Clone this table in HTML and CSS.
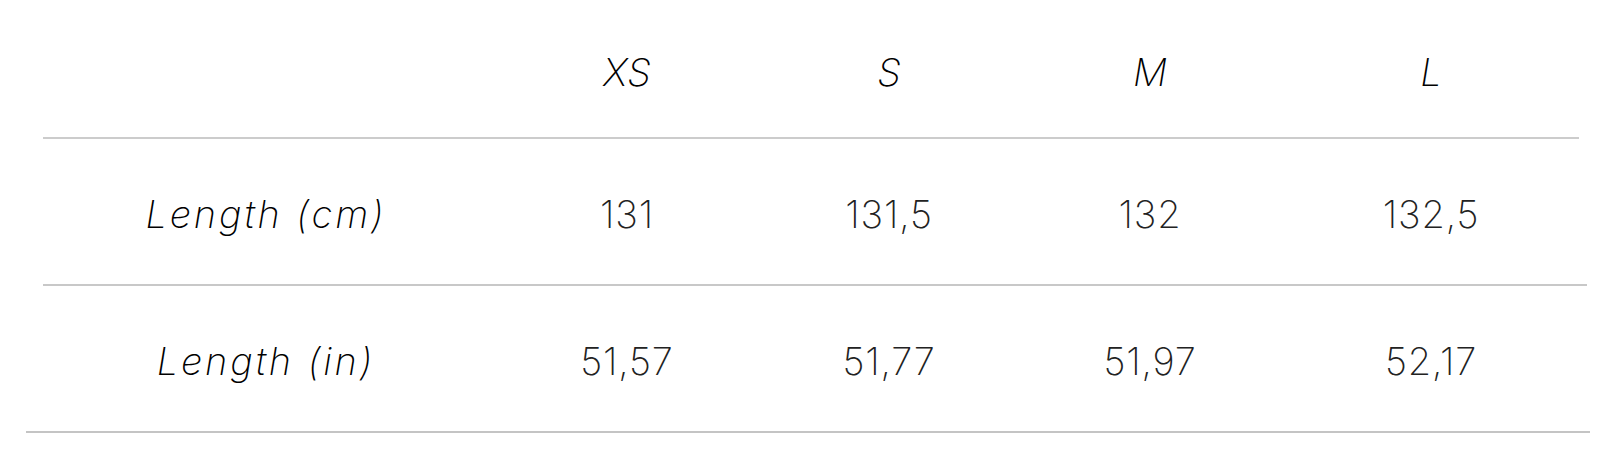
FILE: index.html
```html
<!DOCTYPE html>
<html lang="en">
<head>
<meta charset="utf-8">
<title>Size chart</title>
<link rel="stylesheet" href="styles.css">
</head>
<body>
<div class="chart">
  <div class="row head">
    <div class="cell"></div>
    <div class="cell">XS</div>
    <div class="cell">S</div>
    <div class="cell">M</div>
    <div class="cell">L</div>
  </div>
  <div class="rule rule-1"></div>
  <div class="row">
    <div class="cell label">Length (cm)</div>
    <div class="cell val">131</div>
    <div class="cell val">131,5</div>
    <div class="cell val">132</div>
    <div class="cell val">132,5</div>
  </div>
  <div class="rule rule-2"></div>
  <div class="row">
    <div class="cell label">Length (in)</div>
    <div class="cell val">51,57</div>
    <div class="cell val">51,77</div>
    <div class="cell val">51,97</div>
    <div class="cell val">52,17</div>
  </div>
  <div class="rule rule-3"></div>
</div>
</body>
</html>
```
FILE: styles.css
```css
html, body {
  margin: 0;
  padding: 0;
  background: #ffffff;
}
.chart {
  width: 1621px;
  font-family: Inter, "Noto Sans", sans-serif;
  font-weight: 200;
  color: #111111;
}
.row {
  display: grid;
  grid-template-columns: 436px 296px 228px 294px 268px;
  padding-left: 43px;
  height: 145px;
  align-items: center;
  font-size: 38px;
}
.row.head {
  height: 137px;
  font-size: 38px;
}
.cell {
  text-align: center;
  padding-top: 4px;
}
.head .cell {
  padding-top: 6px;
}
.head .cell,
.label {
  font-style: italic;
  color: #000000;
}
.label {
  letter-spacing: 2.9px;
  padding-left: 10px;
}
.val {
  color: #222222;
  letter-spacing: 0.8px;
}
.rule {
  height: 2px;
  background: #cccccc;
}
.rule-1 { margin: 0 42px 0 43px; }
.rule-2 { margin: 0 34px 0 43px; background: #c8c8c8; }
.rule-3 { margin: 0 31px 0 26px; background: #c4c4c4; }
```
